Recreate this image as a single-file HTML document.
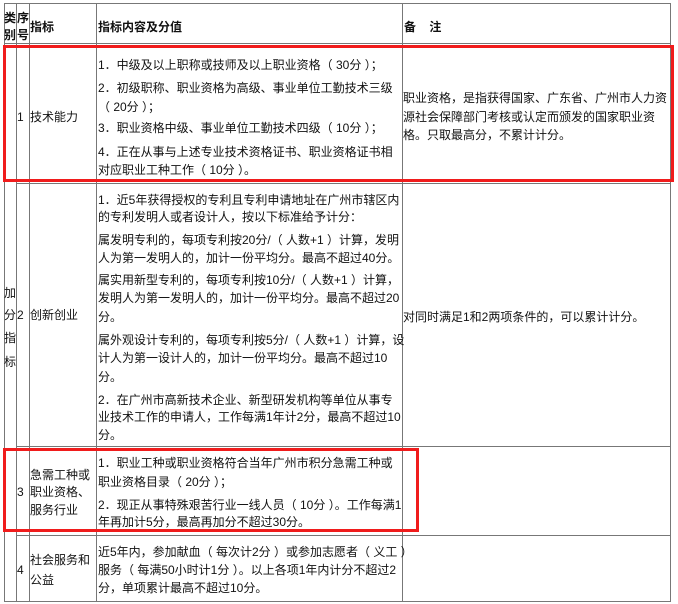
<!DOCTYPE html>
<html><head><meta charset="utf-8"><style>
body{margin:0;background:#fff;width:678px;height:604px;position:relative;overflow:hidden;font-family:"Liberation Sans","Noto Sans CJK SC",sans-serif;font-size:12px;color:#111}
.l{position:absolute;white-space:nowrap;line-height:16px;height:16px}
.b{font-weight:bold}
.v{position:absolute;background:#777;width:1px}
.h{position:absolute;background:#777;height:1px}
.r{position:absolute;border:3px solid #f01c1c;box-sizing:border-box}
</style></head><body>
<div class="h" style="left:4px;width:667px;top:3px"></div>
<div class="h" style="left:4px;width:667px;top:43px"></div>
<div class="h" style="left:16px;width:655px;top:183px"></div>
<div class="h" style="left:16px;width:655px;top:446px"></div>
<div class="h" style="left:16px;width:655px;top:535px"></div>
<div class="h" style="left:4px;width:667px;top:601px"></div>
<div class="v" style="left:4px;top:3px;height:599px"></div>
<div class="v" style="left:16px;top:3px;height:599px"></div>
<div class="v" style="left:29px;top:3px;height:599px"></div>
<div class="v" style="left:96px;top:3px;height:599px"></div>
<div class="v" style="left:402px;top:3px;height:599px"></div>
<div class="v" style="left:670px;top:3px;height:599px"></div>
<div class="l b" style="left:4px;top:10px">类</div>
<div class="l b" style="left:4px;top:27px">别</div>
<div class="l b" style="left:17px;top:10px">序</div>
<div class="l b" style="left:17px;top:27px">号</div>
<div class="l b" style="left:30px;top:19px">指标</div>
<div class="l b" style="left:98px;top:19px">指标内容及分值</div>
<div class="l b" style="left:404px;top:19px">备&nbsp;&nbsp;&nbsp;&nbsp;注</div>
<div class="l" style="left:17px;top:109px">1</div>
<div class="l" style="left:30px;top:109px">技术能力</div>
<div class="l" style="left:98px;top:57px">1．中级及以上职称或技师及以上职业资格（&nbsp;30分&nbsp;）；</div>
<div class="l" style="left:98px;top:80px">2．初级职称、职业资格为高级、事业单位工勤技术三级</div>
<div class="l" style="left:98px;top:99px">（&nbsp;20分&nbsp;）；</div>
<div class="l" style="left:98px;top:120px">3．职业资格中级、事业单位工勤技术四级（&nbsp;10分&nbsp;）；</div>
<div class="l" style="left:98px;top:144px">4．正在从事与上述专业技术资格证书、职业资格证书相</div>
<div class="l" style="left:98px;top:162px">对应职业工种工作（&nbsp;10分&nbsp;）。</div>
<div class="l" style="left:403px;top:90px">职业资格，是指获得国家、广东省、广州市人力资</div>
<div class="l" style="left:403px;top:109px">源社会保障部门考核或认定而颁发的国家职业资</div>
<div class="l" style="left:403px;top:127px">格。只取最高分，不累计计分。</div>
<div class="l" style="left:4px;top:285px">加</div>
<div class="l" style="left:4px;top:307px">分</div>
<div class="l" style="left:4px;top:330px">指</div>
<div class="l" style="left:4px;top:354px">标</div>
<div class="l" style="left:17px;top:307px">2</div>
<div class="l" style="left:30px;top:307px">创新创业</div>
<div class="l" style="left:98px;top:192px">1．近5年获得授权的专利且专利申请地址在广州市辖区内</div>
<div class="l" style="left:98px;top:209px">的专利发明人或者设计人，按以下标准给予计分：</div>
<div class="l" style="left:98px;top:232px">属发明专利的，每项专利按20分/（&nbsp;人数+1&nbsp;）计算，发明</div>
<div class="l" style="left:98px;top:250px">人为第一发明人的，加计一份平均分。最高不超过40分。</div>
<div class="l" style="left:98px;top:272px">属实用新型专利的，每项专利按10分/（&nbsp;人数+1&nbsp;）计算，</div>
<div class="l" style="left:98px;top:290px">发明人为第一发明人的，加计一份平均分。最高不超过20</div>
<div class="l" style="left:98px;top:309px">分。</div>
<div class="l" style="left:98px;top:332px">属外观设计专利的，每项专利按5分/（&nbsp;人数+1&nbsp;）计算，设</div>
<div class="l" style="left:98px;top:350px">计人为第一设计人的，加计一份平均分。最高不超过10</div>
<div class="l" style="left:98px;top:369px">分。</div>
<div class="l" style="left:98px;top:392px">2．在广州市高新技术企业、新型研发机构等单位从事专</div>
<div class="l" style="left:98px;top:409px">业技术工作的申请人，工作每满1年计2分，最高不超过10</div>
<div class="l" style="left:98px;top:427px">分。</div>
<div class="l" style="left:403px;top:309px">对同时满足1和2两项条件的，可以累计计分。</div>
<div class="l" style="left:17px;top:484px">3</div>
<div class="l" style="left:30px;top:467px">急需工种或</div>
<div class="l" style="left:30px;top:484px">职业资格、</div>
<div class="l" style="left:30px;top:502px">服务行业</div>
<div class="l" style="left:98px;top:455px">1．职业工种或职业资格符合当年广州市积分急需工种或</div>
<div class="l" style="left:98px;top:474px">职业资格目录（&nbsp;20分&nbsp;）；</div>
<div class="l" style="left:98px;top:497px">2．现正从事特殊艰苦行业一线人员（&nbsp;10分&nbsp;）。工作每满1</div>
<div class="l" style="left:98px;top:514px">年再加计5分，最高再加分不超过30分。</div>
<div class="l" style="left:17px;top:562px">4</div>
<div class="l" style="left:30px;top:552px">社会服务和</div>
<div class="l" style="left:30px;top:572px">公益</div>
<div class="l" style="left:98px;top:544px">近5年内，参加献血（&nbsp;每次计2分&nbsp;）或参加志愿者（&nbsp;义工&nbsp;）</div>
<div class="l" style="left:98px;top:562px">服务（&nbsp;每满50小时计1分&nbsp;）。以上各项1年内计分不超过2</div>
<div class="l" style="left:98px;top:580px">分，单项累计最高不超过10分。</div>
<div class="r" style="left:3px;top:45px;width:671px;height:137px"></div>
<div class="r" style="left:3px;top:448px;width:416px;height:84px"></div>
</body></html>
